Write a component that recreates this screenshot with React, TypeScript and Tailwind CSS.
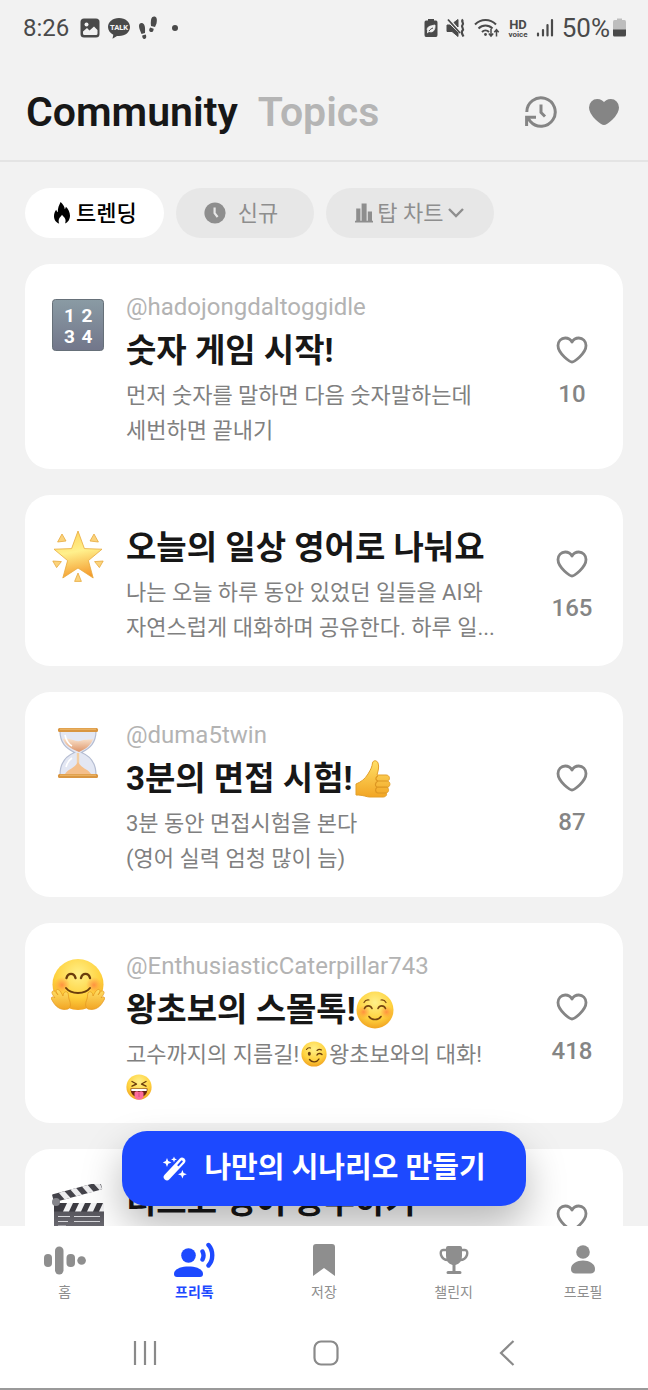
import type { ReactNode } from "react";

type IconProps = { className?: string };

const HEART =
  "M16 26C14.4 26 2 18 2 9.6C2 5.2 5.2 2 9.2 2C12.2 2 14.7 3.6 16 6C17.3 3.6 19.8 2 22.8 2C26.8 2 30 5.2 30 9.6C30 18 17.6 26 16 26Z";

const HeartIcon = ({ className }: IconProps) => (
  <svg viewBox="0 0 32 28" fill="none" className={className} aria-hidden="true">
    <path d={HEART} stroke="currentColor" strokeWidth="2.8" strokeLinejoin="round" />
  </svg>
);

const HeartFilledIcon = ({ className }: IconProps) => (
  <svg viewBox="0 0 32 28" className={className} aria-hidden="true">
    <path d={HEART} fill="currentColor" stroke="currentColor" strokeWidth="2" strokeLinejoin="round" />
  </svg>
);

const HistoryIcon = ({ className }: IconProps) => (
  <svg viewBox="0 0 34 34" fill="none" stroke="currentColor" strokeWidth="3" className={className} aria-hidden="true">
    <path d="M2.8 17A14.2 14.2 0 1 1 6.2 26.2L3.2 22.2" />
    <path d="M2.6 31V22.2H12" />
    <path d="M17 9.5V17.5L21 21.5" />
  </svg>
);

const FireIcon = ({ className }: IconProps) => (
  <svg viewBox="0 0 16 22" className={className} aria-hidden="true">
    <path
      fill="currentColor"
      d="M6.6 0C8.6 1.6 10.6 4.4 10.8 7.2C11.4 6.6 11.8 5.8 11.9 4.8C14.2 7 16 10.4 16 13.6C16 17.6 13.8 20.6 11 21.6C11.8 19.8 11.9 17.6 10.6 15.8C9.8 14.8 8.6 14 8 12.8C7.4 14.2 5.6 15.4 5 17C4.4 18.6 4.6 20.4 5.2 21.6C2.2 20.6 0 17.8 0 14.2C0 11.6 1 9.4 2.2 7.8C2.6 9 3 9.8 3.8 10.2C3.6 6.4 5 3.2 6.6 0Z"
    />
  </svg>
);

const ClockIcon = ({ className }: IconProps) => (
  <svg viewBox="0 0 22 22" className={className} aria-hidden="true">
    <circle cx="11" cy="11" r="10.6" fill="currentColor" />
    <path d="M10.6 5.6V11.2L13.6 15" fill="none" stroke="#e7e7e7" strokeWidth="2.2" />
  </svg>
);

const ChartIcon = ({ className }: IconProps) => (
  <svg viewBox="0 0 18 20" fill="currentColor" className={className} aria-hidden="true">
    <path d="M0 17.8H18V19.6H0ZM1.2 5.6H5.4V19H1.2ZM6.6 .4H11.6V19H6.6ZM12.8 8.6H17V19H12.8Z" />
  </svg>
);

const WandIcon = ({ className }: IconProps) => (
  <svg viewBox="0 0 26 26" className={className} aria-hidden="true">
    <path d="M5 21L20 5" stroke="#fff" strokeWidth="6.6" strokeLinecap="round" />
    <path d="M16.4 9.2L19.8 5.4" stroke="#1d49ff" strokeWidth="2" strokeLinecap="round" />
    <g fill="#fff">
      <path d="M5 2L6.2 5L9.4 6.4L6.2 7.8L5 11L3.8 7.8L.8 6.4L3.8 5Z" />
      <path d="M12 .6L12.8 2.6L15 3.4L12.8 4.2L12 6.4L11.2 4.2L9 3.4L11.2 2.6Z" />
      <path d="M20.4 14L21.6 17L24.8 18.2L21.6 19.4L20.4 22.6L19.2 19.4L16 18.2L19.2 17Z" />
    </g>
  </svg>
);

/* ---------- emoji ---------- */

const EmojiDefs = () => (
  <svg width="0" height="0" className="absolute" aria-hidden="true">
    <defs>
      <radialGradient id="face" cx=".5" cy=".3" r=".75">
        <stop offset="0" stopColor="#fff08a" />
        <stop offset=".6" stopColor="#ffd23e" />
        <stop offset="1" stopColor="#ee9a1c" />
      </radialGradient>
      <radialGradient id="blush">
        <stop offset="0" stopColor="#ff7a3c" stopOpacity=".75" />
        <stop offset="1" stopColor="#ff8a3c" stopOpacity="0" />
      </radialGradient>
      <linearGradient id="hand" x1="0" y1="0" x2="0" y2="1">
        <stop offset="0" stopColor="#ffe067" />
        <stop offset="1" stopColor="#f2a524" />
      </linearGradient>
      <linearGradient id="star" x1=".3" y1="0" x2=".5" y2="1">
        <stop offset="0" stopColor="#ffd45c" />
        <stop offset=".45" stopColor="#fff08c" />
        <stop offset="1" stopColor="#f59a2c" />
      </linearGradient>
      <linearGradient id="slate" x1="0" y1="0" x2="0" y2="1">
        <stop offset="0" stopColor="#8a9ba4" />
        <stop offset="1" stopColor="#72768a" />
      </linearGradient>
      <linearGradient id="sand" x1="0" y1="0" x2="0" y2="1">
        <stop offset="0" stopColor="#fae3cd" />
        <stop offset="1" stopColor="#dd9468" />
      </linearGradient>
      <linearGradient id="board" x1="0" y1="0" x2="0" y2="1">
        <stop offset="0" stopColor="#4c4b52" />
        <stop offset="1" stopColor="#77767d" />
      </linearGradient>
    </defs>
  </svg>
);

const NumbersEmoji = () => (
  <svg viewBox="0 0 52 52" className="size-[52px]" role="img" aria-label="숫자">
    <rect x=".5" y=".5" width="51" height="51" rx="3" fill="url(#slate)" stroke="#667079" />
    <g fill="#fff" fontFamily="Roboto, sans-serif" fontWeight="700" fontSize="19" textAnchor="middle">
      <text x="17.5" y="23">1</text>
      <text x="35" y="23">2</text>
      <text x="17.5" y="44">3</text>
      <text x="35" y="44">4</text>
    </g>
  </svg>
);

const StarEmoji = () => (
  <svg viewBox="0 0 52 52" className="size-[52px]" role="img" aria-label="빛나는 별">
    <g stroke="#e7a93c" strokeWidth=".8" strokeLinejoin="round">
      <path
        d="M26 1L32.4 18.6L50 19.2L36.4 30.6L41.2 48L26 38L10.8 48L15.6 30.6L2 19.2L19.6 18.6Z"
        fill="url(#star)"
      />
      <g fill="#fbd37c">
        <path d="M10 4L14 11L5.6 12Z" />
        <path d="M42 4L46.4 12L38 11Z" />
        <path d="M.8 31L9.4 31.6L4.6 37.6Z" />
        <path d="M51.2 31L42.6 31.6L47.4 37.6Z" />
        <path d="M26 43L29.4 51.4H22.6Z" />
      </g>
    </g>
  </svg>
);

const HourglassEmoji = () => (
  <svg viewBox="0 0 52 52" className="size-[52px]" role="img" aria-label="모래시계">
    <path
      d="M8 4H44C44 16 38 21 29.5 25.5C38 29 44 36 44 48H8C8 36 14 29 22.5 25.5C14 21 8 16 8 4Z"
      fill="#e3e7f3"
      stroke="#b5bdd2"
      strokeWidth="1.2"
    />
    <path d="M11 12C18 10 22 15 28 14C33 12 37 13 41 12C39 18 34 22 27 25C18 21 13 18 11 12Z" fill="url(#sand)" />
    <path d="M26 26V38" stroke="#f2cfa4" strokeWidth="2.4" />
    <path d="M13 47C17 41 22 42 26 35C30 42 35 41 39 47Z" fill="#f4bf8b" />
    <path d="M13 8C14 13 16 17 20 19M14 40C15 36 17 33 20 31" stroke="#fff" strokeWidth="1.6" fill="none" />
    <rect x="6" y="1" width="40" height="4" rx="1.5" fill="#d99642" />
    <rect x="6" y="47" width="40" height="4" rx="1.5" fill="#d99642" />
    <path d="M8 2.2H44M8 48.2H44" stroke="#f0bd70" strokeWidth="1" />
  </svg>
);

const Hand = () => (
  <path
    d="M17 51C9 53 4 48 1 42C-1 39 2 38 4 40C1 36 0 34 2 33C4 32 6 36 7 37C4 33 5 31 7 31.5C9 32 11 36 12 38C12 35 14 33 16 34C18 35 17 38 18 41C20 46 20 49 17 51Z"
    fill="url(#hand)"
    stroke="#e69a22"
    strokeWidth=".8"
  />
);

const HugEmoji = () => (
  <svg viewBox="0 0 54 54" className="size-[54px]" role="img" aria-label="포옹하는 얼굴">
    <circle cx="27" cy="26.5" r="25.5" fill="url(#face)" />
    <circle cx="11" cy="27" r="8" fill="url(#blush)" />
    <circle cx="43" cy="27" r="8" fill="url(#blush)" />
    <g fill="none" stroke="#6b3d0c" strokeLinecap="round">
      <path d="M15.5 20C17 14.5 23 14.5 24.5 20M30 20C31.5 14.5 37.5 14.5 39 20" strokeWidth="2.4" />
      <path d="M15 30C20 36.5 34 36.5 39 30" strokeWidth="2" />
    </g>
    <Hand />
    <g transform="translate(54 0) scale(-1 1)">
      <Hand />
    </g>
  </svg>
);

const ThumbEmoji = () => (
  <svg viewBox="0 0 36 38" className="inline-block w-9 h-[38px] ml-[3px] align-[-8px]" role="img" aria-label="최고">
    <path
      d="M1 24C6 22 10 19 13 14C16 9 17 7 17.5 3C18 0 22 0 23 3C24.5 7 23 11 22 15H31C35 15 35.5 20 32.5 21C36 22 35.5 27 32 27.5C34.5 28.5 34 32.5 31 33C32.5 34.5 31 37 28 37H15C11 37 9 35 1 35Z"
      fill="url(#hand)"
      stroke="#e3a02b"
      strokeWidth="1"
      strokeLinejoin="round"
    />
    <path
      d="M23 21H32M22 27.2H32M22.5 33H31M22.5 16C20 18 20.5 20 23 21C20 22.5 19.5 26 22 27.2C20 29 20 32 22.5 33"
      fill="none"
      stroke="#dc9622"
      strokeWidth="1.2"
      strokeLinecap="round"
    />
  </svg>
);

const SmileEmoji = () => (
  <svg viewBox="0 0 38 38" className="inline-block size-[38px] align-[-8px]" role="img" aria-label="미소">
    <circle cx="19" cy="19" r="18.5" fill="url(#face)" />
    <circle cx="7.5" cy="21" r="6.5" fill="url(#blush)" />
    <circle cx="30.5" cy="21" r="6.5" fill="url(#blush)" />
    <g fill="none" stroke="#77450f" strokeLinecap="round">
      <path d="M8.5 17.5C10 14 14.5 14 16 17.5M22 17.5C23.5 14 28 14 29.5 17.5" strokeWidth="1.6" />
      <path d="M8 11.5C9 9.5 11 8.7 13 9M30 11.5C29 9.5 27 8.7 25 9" strokeWidth="1.2" />
      <path d="M13 25.5C15.5 29.5 22.5 29.5 25 25.5" strokeWidth="1.6" />
    </g>
  </svg>
);

const WinkEmoji = () => (
  <svg viewBox="0 0 26 26" className="inline-block size-[26px] align-[-5px] mx-0.5" role="img" aria-label="윙크">
    <circle cx="13" cy="13" r="12.6" fill="url(#face)" />
    <ellipse cx="8.3" cy="12.8" rx="1.5" ry="2" fill="#6b3d0c" />
    <g fill="none" stroke="#6b3d0c" strokeLinecap="round">
      <path d="M16 14C17 12 19.5 12 21 13.5M8.5 18.5C11 22 16 21.5 18 18" strokeWidth="1.4" />
      <path d="M5.5 8.5C6.5 7 8 6.5 9.5 7M16 9.5C17.5 8 19 8 20.5 9" strokeWidth="1.1" />
    </g>
  </svg>
);

const TongueEmoji = () => (
  <svg viewBox="0 0 26 26" className="block size-[26px]" role="img" aria-label="메롱">
    <circle cx="13" cy="13" r="12.6" fill="url(#face)" />
    <path
      d="M6 7.5L10.5 10L6 12.2M20 7.5L15.5 10L20 12.2"
      fill="none"
      stroke="#6b3d0c"
      strokeWidth="1.4"
      strokeLinecap="round"
      strokeLinejoin="round"
    />
    <path d="M4.5 14.5H21.5C21.5 20 18 23.5 13 23.5C8 23.5 4.5 20 4.5 14.5Z" fill="#6a2411" />
    <path d="M5.3 15H20.7V17H5.3Z" fill="#fff" />
    <path d="M8.5 18.5C10 17 11.5 17 13 18C14.5 17 16 17 17.5 18.5V22C17.5 27 8.5 27 8.5 22Z" fill="#fb6c9c" />
    <path d="M13 18.5V23" stroke="#d4447a" strokeWidth=".8" />
  </svg>
);

const ClapperEmoji = () => (
  <svg viewBox="0 0 54 54" className="size-[54px]" role="img" aria-label="슬레이트">
    <g transform="rotate(-15 4 18)">
      <rect x="3" y="10" width="50" height="8" rx="1" fill="#44434a" />
      <path d="M10 10H16L20 18H14ZM22 10H28L32 18H26ZM34 10H40L44 18H38ZM46 10H52L53 18H50Z" fill="#ececee" />
    </g>
    <rect x="3" y="19" width="50" height="34" rx="1" fill="url(#board)" />
    <path d="M3 19H53V27.5H3Z" fill="#3c3b42" />
    <path
      d="M12 27.5L16 19H22L18 27.5ZM24 27.5L28 19H34L30 27.5ZM36 27.5L40 19H46L42 27.5ZM48 27.5L52 19H53V27.5Z"
      fill="#f3f3f5"
    />
    <circle cx="5" cy="18" r="4" fill="#85858b" />
    <path d="M7 32.5H19M23 32.5H49M7 37.5H17M23 37.5H49M7 42H15" stroke="#d6d6da" strokeWidth="1" />
  </svg>
);

/* ---------- status bar ---------- */

const StatusBar = () => (
  <div className="flex items-center justify-between pl-[23px] pr-[22px] h-14 text-[#4a4a4a]">
    <div className="flex items-center gap-[7px]">
      <span className="text-2xl">8:26</span>
      <svg viewBox="0 0 20 20" className="size-5 ml-1" aria-hidden="true">
        <rect x=".5" y=".5" width="19" height="19" rx="3.5" fill="currentColor" />
        <circle cx="6.5" cy="6.5" r="2" fill="#f2f2f2" />
        <path
          d="M3 15.5V13.5L7 10L9.5 12.5L14 8.5L17.5 12V15.5Q17.5 17 16 17H4.5Q3 17 3 15.5Z"
          fill="#f2f2f2"
        />
      </svg>
      <svg viewBox="0 0 24 22" className="w-6 h-[22px]" aria-hidden="true">
        <path
          d="M12 1C18.5 1 23 5 23 10S18.5 19 12 19L10 18.9L5.5 21.8L6.3 17.7C3 16 1 13.2 1 10C1 5 5.5 1 12 1Z"
          fill="currentColor"
        />
        <text x="12" y="12.8" textAnchor="middle" fontSize="7.5" fontWeight="800" fontFamily="Roboto, sans-serif" fill="#f2f2f2">
          TALK
        </text>
      </svg>
      <svg viewBox="0 0 20 24" className="w-5 h-6" fill="currentColor" aria-hidden="true">
        <path d="M1 10C1 7.5 3 6.5 5 7.5C7 8.5 7.3 12 7 17L3.5 18C2.5 15 1 13 1 10Z" />
        <path d="M4.2 19.4L7.6 18.6C8.6 20 8.6 22.8 6.6 23C5 23.2 4.2 21.5 4.2 19.4Z" />
        <path d="M13 4C13.4 1 15.5 0 17.3.8C19.3 1.8 19 5 18.5 7.5L17 11L13 10C12.7 8 12.7 6 13 4Z" />
        <path d="M12.3 11.6L15.7 12.7C15.6 15 14.5 16.5 12.6 16C10.5 15.4 11 13 12.3 11.6Z" />
      </svg>
      <span className="size-[6px] ml-[7px] rounded-full bg-[#4a4a4a]" />
    </div>
    <div className="flex items-center gap-2">
      <svg viewBox="0 0 14 20" className="w-[14px] h-5" aria-hidden="true">
        <path
          d="M4 1H10V2.5H12Q13.5 2.5 13.5 4.5V17Q13.5 19 12 19H2Q.5 19 .5 17V4.5Q.5 2.5 2 2.5H4Z"
          fill="currentColor"
        />
        <path d="M3.2 12C3 8.5 6 8 11 7C11.5 12 9 15 5 13.5L3 15" fill="#f2f2f2" stroke="#f2f2f2" strokeWidth=".8" />
        <path d="M5 13C6 11.5 7.5 10.5 9 10" stroke="currentColor" fill="none" />
      </svg>
      <svg viewBox="0 0 20 20" className="size-5" fill="none" stroke="currentColor" aria-hidden="true">
        <path d="M1 7H4L12 15V18.5L6 13.5H1ZM8 4.5L12 1.5V9Z" fill="currentColor" />
        <path d="M2 1.5L14 15" strokeWidth="1.8" />
        <path d="M17 1.5C14.5 3.5 18.5 5 16.5 7S18.5 10.5 16.5 12.5S16.5 16.5 17.5 18.5" strokeWidth="2.2" />
      </svg>
      <svg viewBox="0 0 26 20" className="w-[26px] h-5" fill="none" stroke="currentColor" strokeWidth="2" aria-hidden="true">
        <path d="M1 6.5C7 .5 16 .5 22 6.5M4.5 10.5C8.5 6.5 14.5 6.5 18.5 10.5M8 14C10 12 13 12 15 14" />
        <circle cx="11.5" cy="16.5" r="1.4" fill="currentColor" stroke="none" />
        <path d="M17 11V18M14.8 15.5L17 18L19.2 15.5M22.5 18.5V12M20.3 14.2L22.5 11.7L24.7 14.2" strokeWidth="1.5" />
      </svg>
      <svg
        viewBox="0 0 20 26"
        className="w-5 h-[26px]"
        fill="currentColor"
        fontFamily="Roboto, sans-serif"
        fontWeight="700"
        textAnchor="middle"
        role="img"
        aria-label="HD voice"
      >
        <text x="10" y="14" fontSize="13">HD</text>
        <text x="10" y="21.5" fontSize="8">voice</text>
      </svg>
      <svg viewBox="0 0 18 20" className="w-[18px] h-5" fill="none" stroke="currentColor" strokeWidth="2.2" strokeLinecap="round" aria-hidden="true">
        <path d="M2 15.5V17.5M7 12V17.5M11.5 7V17.5M16 2V17.5" />
      </svg>
      <span className="flex items-center gap-[3px]">
        <span className="text-[26px]">50%</span>
        <svg viewBox="0 0 13 20" className="w-[13px] h-5" aria-hidden="true">
          <path d="M4 .5H9V2H11.5Q13 2 13 4V12H0V4Q0 2 1.5 2H4Z" fill="#bdbdbd" />
          <path d="M0 11.5H13V17Q13 18.5 11.5 18.5H1.5Q0 18.5 0 17Z" fill="currentColor" />
        </svg>
      </span>
    </div>
  </div>
);

const Header = () => (
  <header className="flex items-center justify-between pl-[26px] pr-7 pt-2 h-[106px] border-b-2 border-[#e4e4e4]">
    <nav className="flex items-center gap-5 pt-0.5 text-[41px] font-semibold">
      <a href="#community" className="text-[#171717]">
        Community
      </a>
      <a href="#topics" className="text-[#b5b5b5]">
        Topics
      </a>
    </nav>
    <div className="flex items-center gap-[30px] text-[#858585]">
      <button type="button" aria-label="기록">
        <HistoryIcon className="size-[34px]" />
      </button>
      <button type="button" aria-label="좋아요">
        <HeartFilledIcon className="w-8 h-7" />
      </button>
    </div>
  </header>
);

const Filters = () => (
  <div className="flex gap-3 shrink-0 text-[22px] text-[#8e8e8e]">
    <button type="button" className="flex items-center gap-[6px] h-[50px] pl-[29px] pr-[27px] rounded-full bg-white text-black font-medium">
      <FireIcon className="w-4 h-[22px]" />
      트렌딩
    </button>
    <button type="button" className="flex items-center gap-3 h-[50px] pl-[28px] pr-9 rounded-full bg-[#e7e7e7]">
      <ClockIcon className="size-[22px]" />
      신규
    </button>
    <button type="button" className="flex items-center gap-1 h-[50px] px-[29px] rounded-full bg-[#e7e7e7]">
      <ChartIcon className="w-[18px] h-5" />
      탑 차트
      <svg viewBox="0 0 18 12" className="w-[18px] h-3" fill="none" stroke="currentColor" strokeWidth="2.4" aria-hidden="true">
        <path d="M2 2L9 9L16 2" />
      </svg>
    </button>
  </div>
);

type Post = {
  id: number;
  emoji: ReactNode;
  author?: string;
  title: ReactNode;
  lines?: ReactNode[];
  likes?: number;
};

const posts: Post[] = [
  {
    id: 1,
    emoji: <NumbersEmoji />,
    author: "@hadojongdaltoggidle",
    title: "숫자 게임 시작!",
    lines: ["먼저 숫자를 말하면 다음 숫자말하는데", "세번하면 끝내기"],
    likes: 10,
  },
  {
    id: 2,
    emoji: <StarEmoji />,
    title: "오늘의 일상 영어로 나눠요",
    lines: ["나는 오늘 하루 동안 있었던 일들을 AI와", "자연스럽게 대화하며 공유한다. 하루 일..."],
    likes: 165,
  },
  {
    id: 3,
    emoji: <HourglassEmoji />,
    author: "@duma5twin",
    title: (
      <>
        3분의 면접 시험!
        <ThumbEmoji />
      </>
    ),
    lines: ["3분 동안 면접시험을 본다", "(영어 실력 엄청 많이 늠)"],
    likes: 87,
  },
  {
    id: 4,
    emoji: <HugEmoji />,
    author: "@EnthusiasticCaterpillar743",
    title: (
      <>
        왕초보의 스몰톡!
        <SmileEmoji />
      </>
    ),
    lines: [
      <>
        고수까지의 지름길!
        <WinkEmoji />
        왕초보와의 대화!
      </>,
      <span className="block py-0.5">
        <TongueEmoji />
      </span>,
    ],
    likes: 418,
  },
  {
    id: 5,
    emoji: <ClapperEmoji />,
    title: "디스코 영어 공부하기",
  },
];

const PostCard = ({ post }: { post: Post }) => (
  <article className="flex shrink-0 min-h-[171px] pt-[26px] pb-[21px] px-[26px] bg-white rounded-[25px]">
    <div className="flex justify-center w-[54px] shrink-0 pt-[9px]">{post.emoji}</div>
    <div className="flex-1 min-w-0 pl-[21px]">
      {post.author && <p className="text-2xl leading-[34px] text-[#b3b3b3]">{post.author}</p>}
      <h2 className="text-[33px] leading-[54px] h-[54px] font-bold text-[#171717] whitespace-nowrap">{post.title}</h2>
      <div className="text-[22px] leading-[35px] text-[#808080] whitespace-nowrap">
        {post.lines?.map((line, i) => (
          <div key={i}>{line}</div>
        ))}
      </div>
    </div>
    <button
      type="button"
      aria-label="좋아요"
      className="flex flex-col items-center justify-center gap-[14px] w-[50px] pt-2 text-[#858585]"
    >
      <HeartIcon className="w-8 h-7" />
      <span className="h-8 text-2xl font-medium">{post.likes}</span>
    </button>
  </article>
);

const tabs = [
  {
    label: "홈",
    icon: (
      <svg viewBox="0 0 44 32" className="w-11 h-8" fill="currentColor" aria-hidden="true">
        <rect x="1" y="10" width="8" height="13" rx="4" />
        <rect x="12" y="2.5" width="8.5" height="28" rx="4.2" />
        <rect x="23.5" y="10" width="8.5" height="13" rx="4" />
        <circle cx="38.6" cy="16.5" r="4.3" />
      </svg>
    ),
  },
  {
    label: "프리톡",
    active: true,
    icon: (
      <svg viewBox="0 0 42 36" className="w-[42px] h-9" fill="currentColor" aria-hidden="true">
        <circle cx="15.5" cy="13.5" r="7.3" />
        <path d="M1 32C1 27 8 24.5 15.5 24.5S30 27 30 32C30 34 29 35 27 35H4C2 35 1 34 1 32Z" />
        <path
          d="M29.5 9.5C30.8 12 30.8 15 29.5 17.5M35.5 3C40.5 8.5 40.5 18 35.5 23.5"
          fill="none"
          stroke="currentColor"
          strokeWidth="4.4"
          strokeLinecap="round"
        />
      </svg>
    ),
  },
  {
    label: "저장",
    icon: (
      <svg viewBox="0 0 24 32" className="w-6 h-8" fill="currentColor" aria-hidden="true">
        <path d="M1 3Q1 0 4 0H20Q23 0 23 3V32L12 24L1 32Z" />
      </svg>
    ),
  },
  {
    label: "챌린지",
    icon: (
      <svg viewBox="0 0 30 30" className="size-[30px]" fill="currentColor" aria-hidden="true">
        <path d="M9 1H21Q23 1 23 3V11Q23 18 16.5 20V26H21Q22.5 26 22.5 27.5T21 29H9Q7.5 29 7.5 27.5T9 26H13.5V20Q7 18 7 11V3Q7 1 9 1Z" />
        <path
          d="M8 5H4C1.5 5 1.5 8 2 10C3 13 5.5 15 9 15M22 5H26C28.5 5 28.5 8 28 10C27 13 24.5 15 21 15"
          fill="none"
          stroke="currentColor"
          strokeWidth="2.4"
        />
      </svg>
    ),
  },
  {
    label: "프로필",
    icon: (
      <svg viewBox="0 0 26 32" className="w-[26px] h-8" fill="currentColor" aria-hidden="true">
        <circle cx="13" cy="8" r="6.8" />
        <path d="M1 25C1 19.5 7 16.5 13 16.5S25 19.5 25 25C25 28 23.5 29.5 20.5 29.5H5.5C2.5 29.5 1 28 1 25Z" />
      </svg>
    ),
  },
];

const TabBar = () => (
  <nav className="flex bg-white pt-[14px]">
    {tabs.map((tab) => (
      <a
        key={tab.label}
        href={`#${tab.label}`}
        className={
          tab.active
            ? "flex-1 flex flex-col items-center gap-0.5 text-sm font-bold text-[#1d49ff]"
            : "flex-1 flex flex-col items-center gap-0.5 text-sm text-[#8e8e8e]"
        }
      >
        <span className="flex items-center justify-center h-10">{tab.icon}</span>
        <span>{tab.label}</span>
      </a>
    ))}
  </nav>
);

const SystemNav = () => (
  <div className="flex items-center h-[88px] pl-[54px] pr-[50px] pt-4 bg-white border-b-2 border-[#9a9a9a] text-[#8a8a8a]">
    <button type="button" aria-label="최근 앱" className="flex-1 flex justify-center">
      <svg viewBox="0 0 26 26" className="size-[26px]" stroke="currentColor" strokeWidth="2.2" aria-hidden="true">
        <path d="M3 1V25M13 1V25M23 1V25" />
      </svg>
    </button>
    <button type="button" aria-label="홈 화면" className="flex-1 flex justify-center">
      <svg viewBox="0 0 26 26" className="size-[26px]" fill="none" stroke="currentColor" strokeWidth="2.2" aria-hidden="true">
        <rect x="1.5" y="1.5" width="23" height="23" rx="6.5" />
      </svg>
    </button>
    <button type="button" aria-label="뒤로" className="flex-1 flex justify-center">
      <svg viewBox="0 0 16 26" className="w-4 h-[26px]" fill="none" stroke="currentColor" strokeWidth="2.2" aria-hidden="true">
        <path d="M14.5 1L2 13L14.5 25" />
      </svg>
    </button>
  </div>
);

const App = () => {
  return (
    <div className="flex flex-col h-screen bg-[#f2f2f2] font-[Roboto,'Noto_Sans_CJK_KR',sans-serif]">
      <EmojiDefs />
      <StatusBar />
      <Header />
      <div className="relative flex-1 min-h-0">
        <main className="flex flex-col gap-[26px] h-full overflow-y-auto [scrollbar-width:none] px-[25px] pt-[26px] pb-28">
          <Filters />
          {posts.map((post) => (
            <PostCard key={post.id} post={post} />
          ))}
        </main>
        <div className="absolute inset-0 flex items-end justify-center pb-5 overflow-hidden pointer-events-none">
          <button
            type="button"
            className="flex items-center gap-4 h-[75px] px-10 rounded-[25px] bg-[#1d49ff] text-white text-[29px] font-bold shadow-[0_20px_40px_rgba(0,0,0,0.28)] pointer-events-auto"
          >
            <WandIcon className="size-[26px]" />
            나만의 시나리오 만들기
          </button>
        </div>
      </div>
      <TabBar />
      <SystemNav />
    </div>
  );
};

export default App;
